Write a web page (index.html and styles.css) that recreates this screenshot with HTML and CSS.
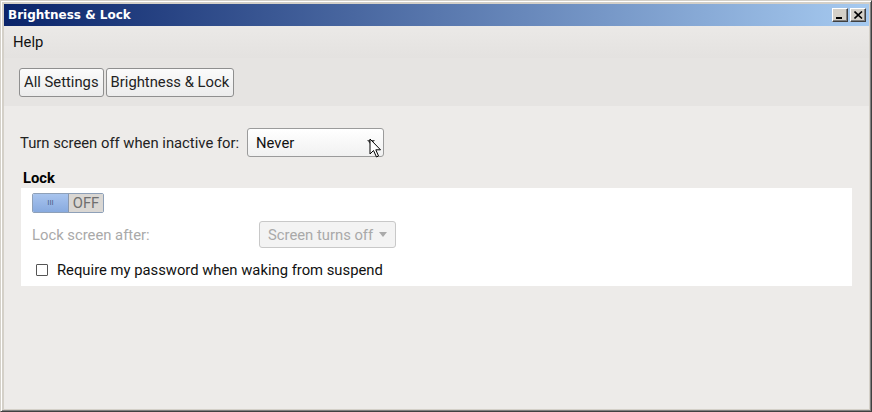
FILE: index.html
```html
<!DOCTYPE html>
<html lang="en">
<head>
  <meta charset="UTF-8">
  <title>Brightness &amp; Lock</title>
  <link rel="stylesheet" href="styles.css">
</head>
<body>
  <div class="window">
    <div class="titlebar">
      <span class="title">Brightness &amp; Lock</span>
      <div class="win-buttons">
        <span class="win-btn"><span class="min-glyph"></span></span>
        <span class="win-btn">
          <svg width="9" height="8" viewBox="0 0 9 8"><path d="M0.5 0.5 L8 7.5 M8 0.5 L0.5 7.5" stroke="#000" stroke-width="1.6"/></svg>
        </span>
      </div>
    </div>

    <div class="menubar">
      <span class="menu-item">Help</span>
    </div>

    <div class="toolbar">
      <button class="crumb">All Settings</button>
      <button class="crumb">Brightness &amp; Lock</button>
    </div>

    <div class="content">
      <div class="row">
        <span class="label">Turn screen off when inactive for:</span>
        <div class="select">
          <span>Never</span>
          <span class="arrow"></span>
          <svg class="cursor" width="14" height="21" viewBox="0 0 14 21">
            <path d="M1 1 L1 16 L4.5 12.5 L7.5 19 L9.5 18 L6.8 11.8 L11.5 11.8 Z" fill="#fff" stroke="#000" stroke-width="1"/>
          </svg>
        </div>
      </div>

      <div class="section-title">Lock</div>
      <div class="panel">
        <div class="toggle">
          <span class="toggle-on">III</span>
          <span class="toggle-off">OFF</span>
        </div>
        <div class="row lock-row">
          <span class="label disabled">Lock screen after:</span>
          <div class="select select-disabled">
            <span>Screen turns off</span>
            <span class="arrow"></span>
          </div>
        </div>
        <label class="check-row">
          <span class="checkbox"></span>
          <span>Require my password when waking from suspend</span>
        </label>
      </div>
    </div>
  </div>
</body>
</html>
```

FILE: styles.css
```css
html, body {
  margin: 0;
  height: 100%;
}
body {
  font-family: Roboto, 'Liberation Sans', sans-serif;
  font-size: 14.8px;
  line-height: 18px;
  color: #222;
  background: #d4d0c8;
}
.window {
  box-sizing: border-box;
  width: 872px;
  height: 412px;
  display: flex;
  flex-direction: column;
  background: #d4d0c8;
  border-top: 1px solid #d4d0c8;
  border-left: 1px solid #d4d0c8;
  border-right: 1px solid #404040;
  border-bottom: 1px solid #404040;
  box-shadow: inset 1px 1px 0 #fff, inset -1px -1px 0 #808080;
  padding: 3px 2px 2px 3px;
}
.titlebar {
  height: 22px;
  flex: none;
  display: flex;
  align-items: center;
  justify-content: space-between;
  background: linear-gradient(to right, #0a246a, #a6caf0);
  padding: 0 3px 0 4px;
}
.title {
  font-family: 'DejaVu Sans', Tahoma, sans-serif;
  font-weight: bold;
  font-size: 12px;
  color: #fff;
}
.win-buttons {
  display: flex;
  gap: 2px;
}
.win-btn {
  box-sizing: border-box;
  width: 16px;
  height: 14px;
  background: #d4d0c8;
  border-top: 1px solid #fff;
  border-left: 1px solid #fff;
  border-right: 1px solid #404040;
  border-bottom: 1px solid #404040;
  box-shadow: inset -1px -1px 0 #808080;
  display: flex;
  align-items: center;
  justify-content: center;
}
.min-glyph {
  width: 6px;
  height: 2px;
  background: #000;
  margin-top: 6px;
  margin-right: 2px;
}
.menubar {
  height: 32px;
  flex: none;
  display: flex;
  align-items: center;
  padding-left: 9px;
  background: linear-gradient(#ebe9e7, #e4e2e0);
}
.menu-item {
  color: #111;
}
.toolbar {
  height: 48px;
  flex: none;
  display: flex;
  align-items: center;
  gap: 2px;
  padding-left: 15px;
  background: #e6e4e2;
}
.crumb {
  font-family: inherit;
  font-size: 14.8px;
  color: #222;
  height: 29px;
  padding: 0 4px;
  background: linear-gradient(#fbfbfb, #ececec);
  border: 1px solid #8f8f8f;
  border-radius: 3px;
}
.content {
  flex: 1;
  background: #edebe9;
  padding: 22px 17px 0 16px;
}
.row {
  display: flex;
  align-items: center;
}
.label {
  width: 227px;
}
.select {
  position: relative;
  box-sizing: border-box;
  width: 137px;
  height: 29px;
  display: flex;
  align-items: center;
  justify-content: space-between;
  padding: 0 8px 0 8px;
  background: linear-gradient(#ffffff, #f1f1f1);
  border: 1px solid #9b9b9b;
  border-radius: 3px;
  color: #111;
}
.arrow {
  width: 0;
  height: 0;
  border-left: 4px solid transparent;
  border-right: 4px solid transparent;
  border-top: 5px solid #555;
}
.cursor {
  position: absolute;
  left: 121px;
  top: 9px;
}
.section-title {
  font-weight: bold;
  margin: 12px 0 1px 3px;
  color: #000;
}
.panel {
  background: #fff;
  margin-left: 1px;
  padding: 5px 11px 7px 11px;
}
.toggle {
  display: flex;
  width: 72px;
  height: 20px;
  box-sizing: border-box;
  border: 1px solid #8ea0b8;
  border-radius: 2px;
  overflow: hidden;
}
.toggle-on {
  width: 35px;
  background: linear-gradient(#a8c4ee, #88aadf);
  color: #4f6388;
  font-size: 8px;
  display: flex;
  align-items: center;
  justify-content: center;
  border-right: 1px solid #8a98ae;
}
.toggle-off {
  flex: 1;
  background: #dad7d3;
  color: #6f6f6f;
  display: flex;
  align-items: center;
  justify-content: center;
}
.lock-row {
  margin-top: 8px;
}
.label.disabled {
  color: #a9a9a9;
}
.select-disabled {
  width: 137px;
  height: 27px;
  border-color: #c8c8c8;
  background: #f3f3f3;
  color: #a9a9a9;
}
.select-disabled .arrow {
  border-top-color: #aaa;
}
.check-row {
  display: flex;
  align-items: center;
  gap: 9px;
  margin-top: 13px;
  margin-left: 4px;
  color: #111;
}
.checkbox {
  width: 10px;
  height: 10px;
  border: 1px solid #555;
  border-radius: 1px;
  background: #fff;
}
```
